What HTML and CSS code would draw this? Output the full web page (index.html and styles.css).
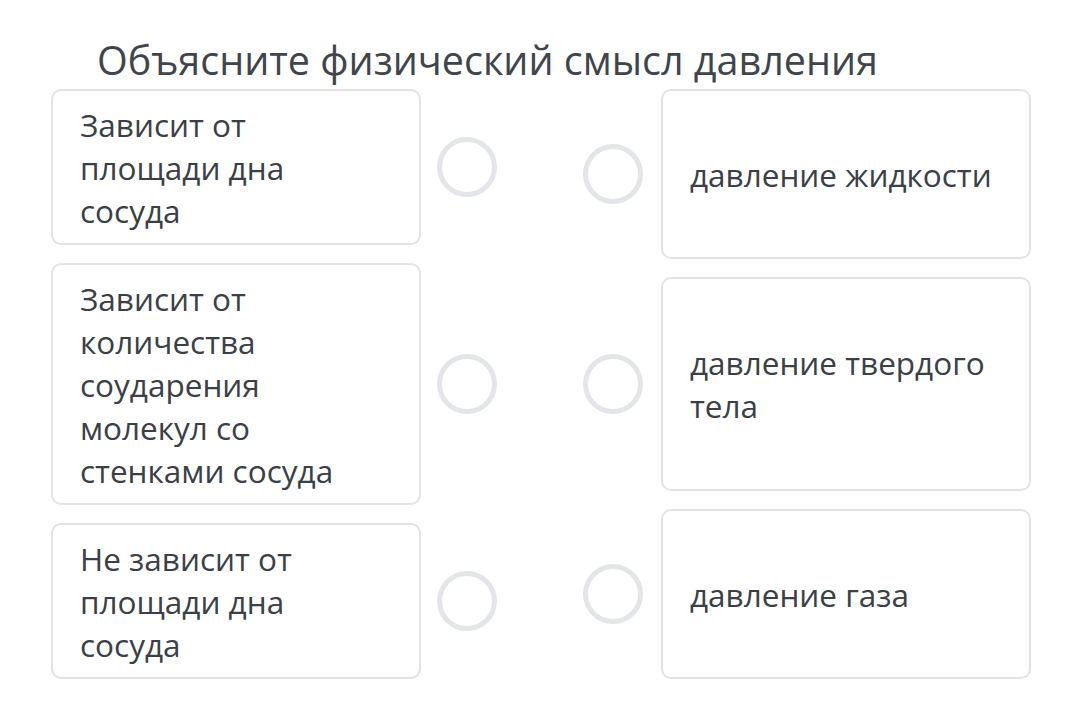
FILE: index.html
```html
<!DOCTYPE html>
<html lang="ru">
<head>
<meta charset="utf-8">
<link rel="stylesheet" href="styles.css">
</head>
<body>
<div class="page">
  <h1 class="title">Объясните физический смысл давления</h1>
  <div class="match">
    <div class="col col-left">
      <div class="item">
        <div class="card">Зависит от площади дна сосуда</div>
        <span class="radio"></span>
      </div>
      <div class="item">
        <div class="card">Зависит от количества соударения молекул со стенками сосуда</div>
        <span class="radio"></span>
      </div>
      <div class="item">
        <div class="card">Не зависит от площади дна сосуда</div>
        <span class="radio"></span>
      </div>
    </div>
    <div class="col col-right">
      <div class="item">
        <span class="radio"></span>
        <div class="card">давление жидкости</div>
      </div>
      <div class="item">
        <span class="radio"></span>
        <div class="card">давление твердого тела</div>
      </div>
      <div class="item">
        <span class="radio"></span>
        <div class="card">давление газа</div>
      </div>
    </div>
  </div>
</div>
</body>
</html>
```

FILE: styles.css
```css
html, body {
  margin: 0;
  padding: 0;
  background: #ffffff;
}
body {
  font-family: "Open Sans", "Liberation Sans", sans-serif;
  color: #3b4047;
}
.page {
  padding: 32px 0 0 51px;
}
.title {
  margin: 0 0 1px 46px;
  font-size: 39.5px;
  font-weight: 400;
  line-height: 56px;
  color: #40454c;
  white-space: nowrap;
}
.match {
  display: flex;
  gap: 86px;
}
.col {
  display: flex;
  flex-direction: column;
  gap: 18px;
}
.col-right .item {
  flex: 1 1 auto;
}
.item {
  display: flex;
  align-items: center;
}
.col-left .item { gap: 16px; }
.col-right .item { gap: 18px; }
.card {
  box-sizing: border-box;
  width: 370px;
  border: 2px solid #e3e3e3;
  border-radius: 10px;
  padding: 12px 39px 11px 27px;
  font-size: 31.5px;
  line-height: 43px;
  align-self: stretch;
  display: flex;
  align-items: center;
}
.col-right .card {
  padding-right: 18px;
}
.radio {
  flex: none;
  box-sizing: border-box;
  width: 60px;
  height: 60px;
  border: 5px solid #e3e5e8;
  border-radius: 50%;
}
```
